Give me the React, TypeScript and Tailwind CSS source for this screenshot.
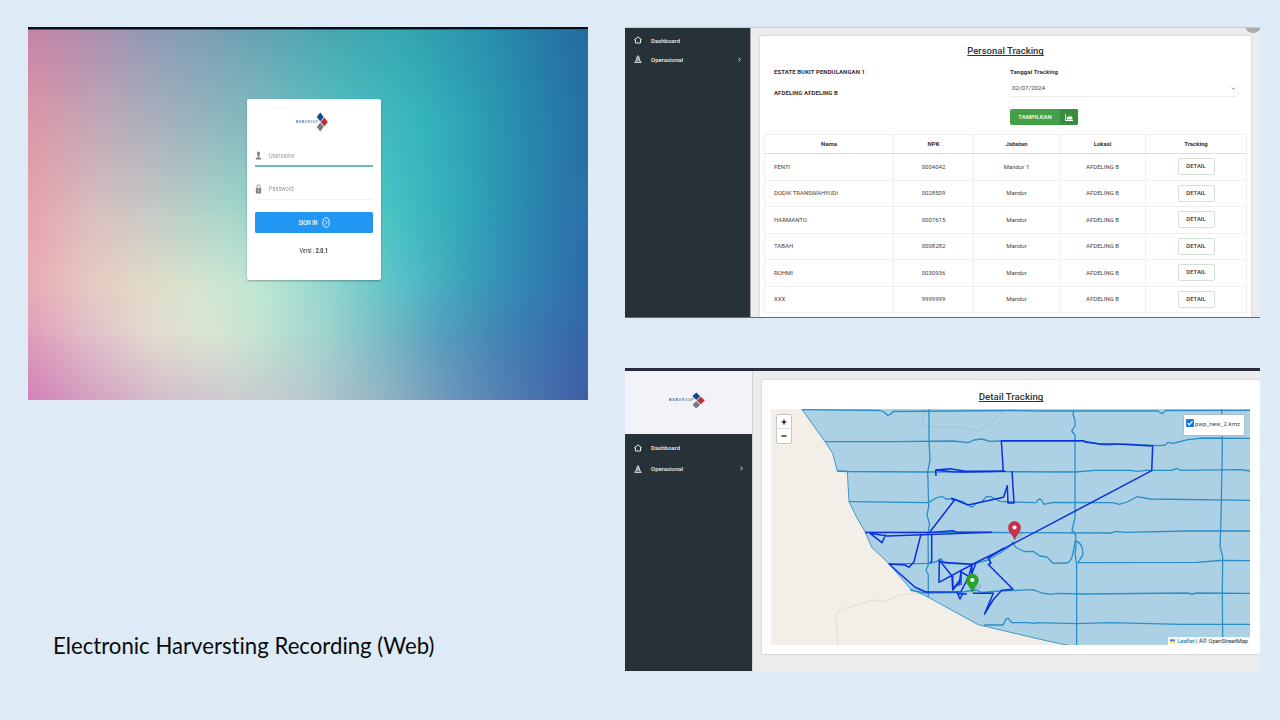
import type { ReactNode } from "react";

type Row = { name: string; npk: string; role: string };

const rows: Row[] = [
  { name: "FENTI", npk: "0004042", role: "Mandor 1" },
  { name: "DODIK TRANSWAHYUDI", npk: "0028509", role: "Mandor" },
  { name: "HARMANTO", npk: "0007615", role: "Mandor" },
  { name: "TABAH", npk: "0008282", role: "Mandor" },
  { name: "ROHMI", npk: "0030936", role: "Mandor" },
  { name: "XXX", npk: "9999999", role: "Mandor" },
];

function Logo({ className }: { className: string }) {
  return (
    <svg viewBox="0 0 36 18" preserveAspectRatio="none" className={className}>
      <text x="0" y="10" fontSize="2.8" fontWeight="700" fontFamily="Liberation Sans, sans-serif" textLength="24.5" fill="#5b6577">
        <tspan fill="#1d4f91">MSM</tspan>GROUP
      </text>
      <path d="M27.3 .5 31.2 4.5 27.3 8.500 23.4 4.5Z" fill="#134a8e" />
      <path d="M31.8 5 35.800 9 31.8 13 27.8 9Z" fill="#bf2f33" />
      <path d="M27.3 9.500 31.2 13.500 27.3 17.500 23.4 13.500Z" fill="#7b7b7d" />
    </svg>
  );
}

function LoginBackdrop() {
  return (
    <div className="absolute inset-0">
      <div className="absolute inset-0 bg-[linear-gradient(90deg,#c583a6_0%,#ab8eae_12%,#8f9ab5_22%,#72a0b4_36%,#4fa7b2_50%,#37a8b1_65%,#2b94ae_80%,#267fa8_90%,#266ba2_100%)]" />
      <div className="absolute inset-0 bg-[linear-gradient(90deg,#de96a8_0%,#bea9b8_14%,#9eb2bd_27%,#7fbabf_41%,#50bfc0_56%,#36b5bd_70%,#2b9bb3_82%,#2786ad_90%,#276fa4_100%)] [mask-image:linear-gradient(transparent_0%,black_25%)]" />
      <div className="absolute inset-0 bg-[linear-gradient(90deg,#e9a2ac_0%,#dabfc0_12%,#c3cbc6_23%,#a6d6ca_36%,#75cdc7_50%,#45c3c3_65%,#2fa6b9_79%,#2b88b0_89%,#2b70a8_100%)] [mask-image:linear-gradient(transparent_25%,black_50%)]" />
      <div className="absolute inset-0 bg-[linear-gradient(90deg,#e8acb5_0%,#e6cac2_11%,#e3dac7_20%,#d6e5d0_30%,#bde8d4_42%,#8dd4cd_55%,#56c0c6_67%,#3b9fba_79%,#3285b4_89%,#2d6ba9_100%)] [mask-image:linear-gradient(transparent_48%,black_70%)]" />
      <div className="absolute inset-0 bg-[linear-gradient(90deg,#df9dba_0%,#e1c2cb_12%,#e3dcd0_23%,#d8e5d2_33%,#c2e3d3_42%,#a0d3cd_53%,#7bbcc6_63%,#579dbe_74%,#3f80b3_86%,#3664a9_100%)] [mask-image:linear-gradient(transparent_68%,black_84%)]" />
      <div className="absolute inset-0 bg-[linear-gradient(90deg,#d07db6_0%,#d39fc1_12%,#d2bbca_24%,#cdcacf_37%,#bac8ce_50%,#93b1c2_64%,#678fb8_78%,#4c74af_90%,#3f5da4_100%)] [mask-image:linear-gradient(transparent_82%,black_102%)]" />
    </div>
  );
}

function Squeezed({ children, className = "" }: { children: ReactNode; className?: string }) {
  return <span className={"inline-block whitespace-nowrap " + className}>{children}</span>;
}

function LoginPanel() {
  return (
    <section className="relative h-[373px] w-[560px] overflow-hidden">
      <LoginBackdrop />
      <div className="absolute inset-x-0 top-0 h-[3px] border-b border-[#35606b] bg-[#06101a]" />
      <div className="relative flex justify-center pt-[72px] pl-[11px]">
        <div className="flex h-[181px] w-[134px] flex-col rounded-[2px] bg-white px-2 shadow-[0_1px_2px_rgba(0,0,0,0.3)]">
          <div className="flex h-[46px] items-center justify-center pr-[3px]">
            <Logo className="-mt-px h-5 w-[32px]" />
          </div>
          <div className="flex h-[22px] items-center border-b-2 border-[#6cbab5] pt-px text-[8px] text-[#999]">
            <svg viewBox="0 0 8 10" className="h-[9px] w-[7px]" fill="#858585">
              <path d="M4 .5C2.500.5 2 1.900 2.300 3.300c.2 1 .5 1.500.8 1.900v1.700L.8 8v1.500h6.400V8L4.900 6.900V5.200c.3-.4.6-.9.8-1.900C6 1.900 5.500.5 4 .5Z" />
            </svg>
            <Squeezed className="ml-[7px] origin-left scale-x-[0.7]">Username</Squeezed>
          </div>
          <div className="mt-[10px] flex h-[23px] items-center border-b border-[#f1f1f1] pt-px text-[8px] text-[#999]">
            <svg viewBox="0 0 8 12" className="h-[10px] w-[7px]" fill="#858585">
              <path d="M.8 5h6.400v6.500H.8Z" />
              <path d="M2.200 5V3.200a1.800 2.200 0 0 1 3.600 0V5" fill="none" stroke="#858585" strokeWidth="1.100" />
              <path d="M3.500 7h1v2.500h-1Z" fill="#ccc" />
            </svg>
            <Squeezed className="ml-[7px] origin-left scale-x-[0.7]">Password</Squeezed>
          </div>
          <button className="mt-[12px] flex h-[21px] items-center justify-center rounded-[1.5px] bg-[#2196f3] pr-[3px] text-[8px] font-medium text-white">
            <Squeezed className="-mr-[4px] scale-x-[0.68]">SIGN IN</Squeezed>
            <svg viewBox="0 0 8 11" className="ml-[4px] h-[11px] w-[8px]" fill="none" stroke="white">
              <ellipse cx="4" cy="5.500" rx="3.200" ry="4.700" strokeWidth=".9" />
              <path d="M3.200 3.300 5 5.500 3.200 7.700" strokeWidth=".9" />
            </svg>
          </button>
          <div className="mt-[13px] flex justify-center text-[7.500px] leading-[10px] text-[#333]">
            <Squeezed className="scale-x-[0.72]">
              Versi : <b>2.0.1</b>
            </Squeezed>
          </div>
        </div>
      </div>
    </section>
  );
}

function HomeIcon() {
  return (
    <svg viewBox="0 0 16 16" className="h-[8px] w-[8px]" fill="none" stroke="white" strokeWidth="1.800">
      <path d="M.4 8 8 1.800 15.600 8" />
      <path d="M3 7V14h10V7" />
    </svg>
  );
}

function ConeIcon() {
  return (
    <svg viewBox="0 0 16 16" className="h-[8px] w-[8px]" fill="none" stroke="white" strokeWidth="1.500">
      <path d="M.8 14.500h14.400" strokeWidth="2" />
      <path d="M3.300 14 7 1.800h2L12.700 14" />
      <path d="M5.500 6h5M4.500 10h7" strokeWidth="2" />
    </svg>
  );
}

function Menu({ gap }: { gap: "tight" | "loose" }) {
  const item = gap === "tight" ? "flex h-[19px] items-center" : "flex h-[21px] items-center";
  return (
    <nav className="pr-2 pl-[9px] text-[6px] font-medium text-[#eceff0]">
      <div className={item}>
        <HomeIcon />
        <span className="ml-[9px]">Dashboard</span>
      </div>
      <div className={item}>
        <ConeIcon />
        <span className="ml-[9px] flex-1">Operasional</span>
        <svg viewBox="0 0 6 6" className="h-[5px] w-[5px]" fill="none" stroke="white">
          <path d="M2 1 4 3 2 5" />
        </svg>
      </div>
    </nav>
  );
}

const columns = "grid grid-cols-[129px_80px_86px_86px_101px]";
const cell = "flex items-center justify-center border-r border-[#f0f0f0] pb-px";

function TrackingTable() {
  return (
    <div className="mx-1 mt-[8px] w-[483px] border-t border-l border-[#f0f0f0] text-[6px] text-[#444]">
      <div className={columns + " h-[19px] border-b border-[#dddddd] font-bold text-[#333]"}>
        {["Nama", "NPK", "Jabatan", "Lokasi", "Tracking"].map((h) => (
          <div key={h} className="flex items-center justify-center border-r border-[#f0f0f0] pb-[2px]">
            {h}
          </div>
        ))}
      </div>
      {rows.map((r) => (
        <div key={r.npk} className={columns + " h-[26.500px] border-b border-[#f0f0f0]"}>
          <div className="flex items-center border-r border-[#f0f0f0] pb-px pl-[9px]">{r.name}</div>
          <div className={cell}>{r.npk}</div>
          <div className={cell}>{r.role}</div>
          <div className={cell}>AFDELING B</div>
          <div className="flex items-center justify-center border-r border-[#f0f0f0]">
            <button className="h-[17px] w-[37px] rounded-[2px] border border-[#d5e0d5] text-[5.900px] font-medium text-[#333]">DETAIL</button>
          </div>
        </div>
      ))}
    </div>
  );
}

function PersonalPanel() {
  return (
    <section className="relative flex h-[291px] w-[635px] overflow-hidden border-t border-[#c5cad0] bg-[#ececec]">
      <aside className="w-[125px] shrink-0 bg-[#263238] pt-[2.500px]">
        <Menu gap="tight" />
      </aside>
      <div className="border-l border-[#a5a9ab] pt-[8px] pl-[9px]">
        <div className="h-[290px] w-[491px] rounded-t-[2px] bg-white shadow-[0_0_2px_rgba(0,0,0,0.25)]">
          <h1 className="h-[23px] pt-[8px] text-center text-[9.500px] leading-[14px] font-medium text-[#333]">
            <span className="underline decoration-1 underline-offset-1 [text-decoration-skip-ink:none]">Personal Tracking</span>
          </h1>
          <div className="grid h-[67px] grid-cols-[236px_226px] pl-[14px] text-[6px] text-[#333]">
            <div className="pt-[8px] font-bold tracking-[0.07px]">
              <p className="leading-[10px]">ESTATE BUKIT PENDULANGAN 1</p>
              <p className="mt-[11px] leading-[10px]">AFDELING AFDELING B</p>
            </div>
            <div className="pt-[8px]">
              <p className="leading-[10px] font-bold tracking-[0.1px]">Tanggal Tracking</p>
              <div className="mt-[3px] flex h-[17px] items-center justify-between border-b border-[#eeeeee] text-[6.200px] text-[#444]">
                <span className="pt-px pl-[2px]">02/07/2024</span>
                <svg viewBox="0 0 6 6" className="h-[5px] w-[5px]" fill="none" stroke="#777">
                  <path d="M1 2 3 4 5 2" />
                </svg>
              </div>
              <button className="mt-[12px] flex h-[16px] w-[68px] overflow-hidden rounded-[2px] bg-[#43a047] text-[6px] font-medium text-white">
                <span className="flex h-full w-[50px] items-center justify-center pb-px">TAMPILKAN</span>
                <span className="flex h-full w-[18px] items-center justify-center bg-[#388e3c]">
                  <svg viewBox="0 0 16 14" className="h-[7px] w-[8px]" fill="white">
                    <path d="M0 0h1.500v12H16v2H0ZM3.500 11V7L5 5.500 6.500 7 8 2.500 10 6 12.500 4 15 8v3Z" />
                  </svg>
                </span>
              </button>
            </div>
          </div>
          <TrackingTable />
        </div>
      </div>
      <div className="absolute -top-[11px] right-[-1px] h-[16px] w-[16px] rounded-full bg-[#aaaaaa]" />
      <div className="absolute inset-x-0 bottom-0 h-px bg-[#656a70]" />
    </section>
  );
}

const blockLines = [
  "M802 409.700 880 410.500 884 412 887.700 415.500 891 414 893 411.500 1014 410.500 1044 411 1158 411 1162 413.700 1166 410.500 1250 410.300",
  "M825 441.700H895L953 441 968 442.700 974 440 981.700 439 990 441.300 1000 441H1083L1105 445 1123 444 1160 445.700 1165 445 1168 442.300 1173 443.300 1188 439.700 1203 438 1250 438.300",
  "M837 471 847 471.500 927 472 1000 471.700 1075 472 1095 470.300 1130 470.300 1138 471.300 1146 470.300 1172 470.300 1176.700 468.300 1180 470.300 1240 469.700 1250 471",
  "M849 501.700 927 502.700 930 501.700 936 498 941.700 496.300 946 499 953 499 963 501.700 971.700 507.300 977 503 981.700 502 986 497 990 496.300 1000 501.300 1015 502 1036 502.700 1039 499 1041 499.500 1044 504.300 1053 502.300 1113 502.700 1119 504.300 1127 502 1137 496.700 1150 499 1250 500.300",
  "M865 532.300H928L1000 532.500 1111.700 533 1115 531.300 1125 532.300 1187 531H1250",
  "M889 564 930 563.300 937 561.500 940.700 558.700 945 563.300 972 564.300 988 560 1000 553 1010 546 1013 542C1014 548 1019 549 1025 551.700L1033 551.300 1040 556 1047 557 1053 563.300 1067 563C1073 561 1073 551 1075 543V541C1082 542 1083 548 1083 554 1082 558 1079 560 1078 562.700L1197 562.300 1220 560.500 1250 560.700",
  "M910 590 925 593 960 592.500 975 590 983 592.500 1000 591 1033 589.700 1041.700 593 1051 594.300 1057 593.300 1083 594 1187 593 1192 594 1197 593 1250 593.300",
  "M984 625 1003 625 1006 619 1008 618.300 1012 622.700 1030 622.700 1033 623.700 1036 622.700 1077 623.700 1110 622.700 1180 624.300 1250 624.300",
  "M929 409V440L930 460 927.700 471.700 928.700 506.700 927 515 929.500 524 928 533 928.300 565 926 570 928.300 575V597",
  "M1074 410 1073 415 1075 420V426L1071.700 431 1075 435V518L1072 530 1075.700 535 1076 548 1075 553 1076.700 565V645",
  "M1221.700 409 1222.300 447 1221 520 1220 547 1222.700 556.700 1222.300 593 1222.700 645",
];

const trackLines = [
  "M936 476 935.700 470 950 468.700 965 471.300H1005L1003.300 471 1001.300 440.700H1083L1085 442 1100 444 1117 444 1152.700 446 1151.700 470.700 1000 550.700 975 563 939 582.300 939.300 560 952 576 952.700 590 957 585 959 585 961 571.700 968 576",
  "M936 470 952 471.700 967 472 1003 471.300",
  "M930 531.700 954 500.700 951.700 498.300 968 505 1003.500 497.300 1007.300 485.700 1008 503 1014 503 1012 471",
  "M865 532.500 930 532.500 953 530.700 956 532 991.700 532.300 930 534.500 887 536 870 533.300 882 542.700 885.700 534.500",
  "M921 534 914 561.700 909 567.300 905 565 889 564 915 587.300 926 592 961 591.700 969 576 971.700 565",
  "M931.700 534V561L930 563M940 562 972 564.300 971.700 574 976 563M952.700 576 953 589 960 580",
  "M957 592 960 599 963 593M961 572V585M958 594H967",
  "M1004 548 988 558 991 563 988.300 564.500 1013 589.300 1001.700 590.300 993 600 984.500 614 993.300 593.300 973 593.300",
];

function Pin({ x, y, color, edge }: { x: number; y: number; color: string; edge: string }) {
  return (
    <g transform={`translate(${x} ${y})`}>
      <path d="M0 0 3-6 8-9 10-7 6-2Z" fill="#28465a" opacity=".13" />
      <path d="M0 0C-.7-5-6-7-6-12.500A6 6 0 0 1 6-12.500C6-7 .7-5 0 0Z" fill={color} stroke={edge} strokeWidth=".6" />
      <circle cy="-12.500" r="2.100" fill="white" />
    </g>
  );
}

function TrackingMap() {
  return (
    <div className="relative h-[236px] w-[479px] overflow-hidden bg-[#f3eee8]">
      <svg viewBox="771 409 479 236" className="h-[236px] w-[479px]" fill="none" strokeLinejoin="round">
        <path d="M838 645 836 616Q838 609 850 607L874 600 884 602 900 595 920 593" stroke="#e5e1db" strokeWidth="1.500" />
        <path d="M801 408 825 441.700 832.700 453.300 837.300 471 847.300 471.300 849 501.700 856.700 517.300 865 531.700 871.700 547.300 889.300 564 910 588.300 928.300 597.300 978.300 624.700 1040 639.300 1076 647H1252V407Z" fill="#add1e4" stroke="#3f9acb" strokeWidth="1" />
        <path d="M926 411 922 422Q922 427 930 427L960 427 978 431 990 424 1003 411" stroke="#a2c4d5" strokeWidth="1.200" />
        {blockLines.map((d) => (
          <path key={d} d={d} stroke="#2a8fc8" strokeWidth="1.300" />
        ))}
        {trackLines.map((d) => (
          <path key={d} d={d} stroke="#0c2fe0" strokeWidth="1.500" />
        ))}
        <Pin x={1014.500} y={540} color="#cb2f49" edge="#a8273d" />
        <Pin x={972.300} y={592.500} color="#2aa52c" edge="#218a24" />
      </svg>
      <div className="absolute top-[5px] left-[5px] flex h-[30px] w-[16px] flex-col rounded-[2px] border border-[#c9c6c1] bg-white">
        <div className="flex h-[14px] items-center justify-center border-b border-[#dddddd]">
          <svg viewBox="0 0 6 6" className="h-[6px] w-[6px]" stroke="black" strokeWidth="1.200">
            <path d="M.5 3h5M3 .5v5" />
          </svg>
        </div>
        <div className="flex h-[14px] items-center justify-center">
          <svg viewBox="0 0 6 6" className="h-[6px] w-[6px]" stroke="black" strokeWidth="1.200">
            <path d="M.5 3h5" />
          </svg>
        </div>
      </div>
      <div className="absolute top-[5px] right-[5px] flex h-[22px] w-[62px] items-center rounded-[2px] border border-[#a9bdc8] bg-white pb-[4px] pl-[2px] text-[6px] text-[#444]">
        <svg viewBox="0 0 8 8" className="h-[8px] w-[8px]">
          <rect width="8" height="8" rx="1" fill="#1976e8" />
          <path d="M1.600 4.200 3.300 5.900 6.500 2.200" fill="none" stroke="white" strokeWidth="1.200" />
        </svg>
        <span className="ml-px pt-px tracking-[0.1px]">pwp_new_2.kmz</span>
      </div>
      <div className="absolute right-0 bottom-0 flex h-[8px] w-[82px] items-center justify-end bg-white/90 pr-[2px] text-[5.700px] whitespace-pre text-[#333]">
        <svg viewBox="0 0 6 4" className="mr-[2px] h-[4px] w-[5px]">
          <path d="M0 0h6v2H0Z" fill="#4c7be1" />
          <path d="M0 2h6v2H0Z" fill="#ffd500" />
        </svg>
        <span className="text-[#0078a8]">Leaflet</span> | Â© OpenStreetMap
      </div>
    </div>
  );
}

function DetailPanel() {
  return (
    <section className="flex h-[303px] w-[635px] flex-col overflow-hidden bg-[#ececec]">
      <div className="h-[3px] shrink-0 bg-[#282c3d]" />
      <div className="flex flex-1">
        <aside className="flex w-[127px] shrink-0 flex-col bg-[#263238]">
          <div className="flex h-[63px] items-center justify-center bg-[#f1f3f8] pb-[4px]">
            <Logo className="-ml-[3px] h-[17px] w-[36px]" />
          </div>
          <div className="pt-[3px]">
            <Menu gap="loose" />
          </div>
        </aside>
        <div className="border-l border-[#d2d4d6] pt-[9px] pl-[9px]">
          <div className="h-[274px] w-[498px] rounded-[2px] bg-white px-[9px] shadow-[0_0_2px_rgba(0,0,0,0.25)]">
            <h1 className="h-[29px] pt-[10px] text-center text-[9.700px] leading-[14px] font-medium text-[#333]">
              <span className="underline decoration-1 underline-offset-1 [text-decoration-skip-ink:none]">Detail Tracking</span>
            </h1>
            <TrackingMap />
          </div>
        </div>
      </div>
    </section>
  );
}

export default function App() {
  return (
    <main className="flex h-[720px] w-[1280px] overflow-hidden bg-[#deeaf6] pt-[27px] pl-[28px] font-['Roboto','Liberation_Sans',sans-serif]">
      <div className="flex w-[597px] shrink-0 flex-col">
        <LoginPanel />
        <h2 className="mt-[231px] ml-[25px] font-['Lato','Liberation_Sans',sans-serif] text-[22.200px] leading-[30px] whitespace-nowrap text-[#0a0a0a] [font-variant-ligatures:none]">
          Electronic Harversting Recording (Web)
        </h2>
      </div>
      <div className="flex flex-col gap-[50px]">
        <PersonalPanel />
        <DetailPanel />
      </div>
    </main>
  );
}
